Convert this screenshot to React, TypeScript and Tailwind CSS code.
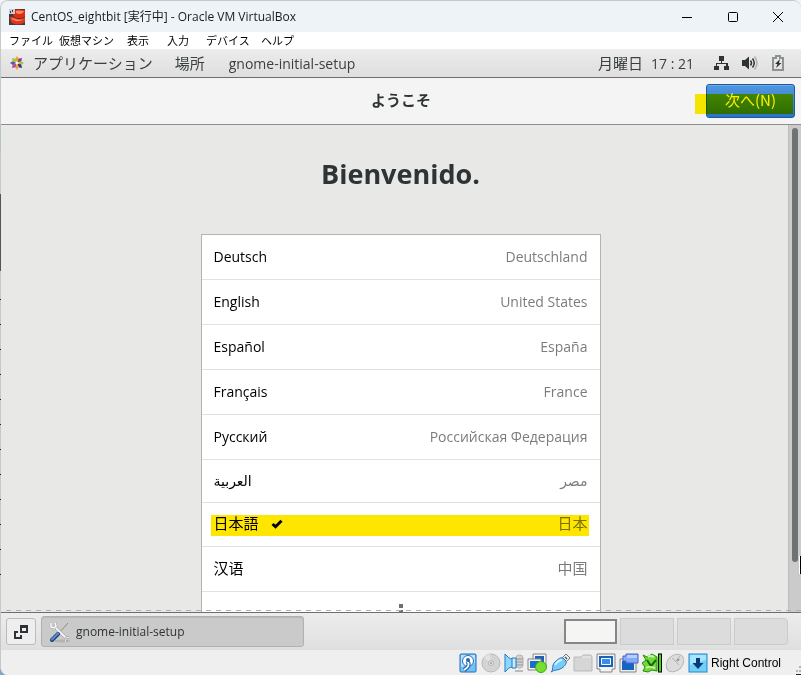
import React from "react";

type Language = { name: string; country: string; height: string; selected?: boolean; lang: string };

const languages: Language[] = [
  { name: "Deutsch", country: "Deutschland", height: "h-[45px]", lang: "de" },
  { name: "English", country: "United States", height: "h-[45px]", lang: "en" },
  { name: "Español", country: "España", height: "h-[45px]", lang: "es" },
  { name: "Français", country: "France", height: "h-[45px]", lang: "fr" },
  { name: "Русский", country: "Российская Федерация", height: "h-[45px]", lang: "ru" },
  { name: "العربية", country: "مصر", height: "h-[43px]", lang: "ar" },
  { name: "日本語", country: "日本", height: "h-[44px]", lang: "ja", selected: true },
  { name: "汉语", country: "中国", height: "h-[45px]", lang: "zh" },
];

const menus: [string, string][] = [
  ["ファイル", "w-[50px]"],
  ["仮想マシン", "w-[68px]"],
  ["表示", "w-[40px]"],
  ["入力", "w-[39px]"],
  ["デバイス", "w-[55px]"],
  ["ヘルプ", "w-[50px]"],
];

const cjk = "font-['Open_Sans','Noto_Sans_CJK_JP',sans-serif]";

function VirtualBoxIcon() {
  return (
    <svg width="16" height="16" viewBox="0 0 16 16" aria-hidden="true">
      <rect width="16" height="16" fill="#3a3d41" />
      <path d="M5 1c4-1 7 0 11 0v6c-1 2-4 2-7 2-3 0-5-2-5-4z" fill="#e02c14" />
      <path d="M7 2c3-1 5 0 8 0-1 3-5 4-8 2z" fill="#ff8a62" />
      <path d="M0 0h6v5H0z" fill="#c9cdd0" />
      <path d="M1 2h1v2H1zM3 1h1v2H3z" fill="#3a3d41" />
      <path d="M1 8c3-1 5 1 8 2 2 0 5 0 7-2v5c-3 3-10 3-13 1-1-1-2-4-2-6z" fill="#e4351b" />
      <path d="M2 9c3 0 6 3 12 1-2 3-9 3-12-1z" fill="#ff8a66" />
    </svg>
  );
}

function CentosIcon() {
  const petals: [string, number][] = [
    ["#f0a32a", 0], ["#8a3b8f", 45], ["#9ccb3a", 90], ["#33307f", 135],
    ["#f0a32a", 180], ["#b0479b", 225], ["#6b50a8", 270], ["#9ccb3a", 315],
  ];
  return (
    <svg width="16" height="16" viewBox="0 0 16 16" aria-hidden="true">
      {petals.map(([fill, angle]) => (
        <path key={angle} d="M8 7 6 4 8 1l2 3z" fill={fill} transform={`rotate(${angle} 8 8)`} />
      ))}
      <circle cx="8" cy="8" r="1" fill="#fff" />
    </svg>
  );
}

function NetworkIcon() {
  return (
    <svg width="16" height="16" viewBox="0 0 16 16" fill="#2e3436" aria-hidden="true">
      <path d="M5 1h5v5H8v2h6v3h1v4h-5v-4h2V9H3v2h2v4H0v-4h2V8h5V6H5z" />
    </svg>
  );
}

function VolumeIcon() {
  return (
    <svg width="16" height="16" viewBox="0 0 16 16" fill="none" aria-hidden="true">
      <path d="M0 5h3l4-3.500v13L3 11H0z" fill="#2e3436" />
      <path d="M8.500 5.500q2 2.500 0 5M10.500 3.500q3.500 4.500 0 9" stroke="#2e3436" strokeWidth="1.500" />
      <path d="M12.500 1.500q5 6.500 0 13" stroke="#b0b2b2" strokeWidth="1.500" />
    </svg>
  );
}

function BatteryIcon() {
  return (
    <svg width="12" height="16" viewBox="0 0 12 16" aria-hidden="true">
      <path d="M4 1h4v2h3v12H1V3h3z" fill="none" stroke="#8f9292" strokeWidth="2" />
      <path d="M8 4 3 9h2.500L4 13l5.500-5H7z" fill="#2e3436" />
    </svg>
  );
}

function CheckIcon() {
  return (
    <svg width="12" height="10" viewBox="0 0 12 10" aria-hidden="true">
      <path d="M1.500 5 4.500 7.700 10.500 1.800" fill="none" stroke="#000" strokeWidth="3" />
    </svg>
  );
}

function ToolsIcon() {
  return (
    <svg width="22" height="22" viewBox="0 0 22 22" fill="none" aria-hidden="true">
      <ellipse cx="13" cy="20" rx="8" ry="1.500" fill="#b2b2b2" />
      <path d="M19 2 10 12" stroke="#8a8a8a" />
      <path d="M5 5 18 18" stroke="#999" strokeWidth="3" />
      <path d="M5 5 18 18" stroke="#f5f5f5" strokeWidth="2" />
      <path d="M2 2v4l3 1 2-2-1-3" stroke="#a5a5a5" strokeWidth="2.500" />
      <path d="M2 2v4l3 1 2-2-1-3" stroke="#fff" strokeWidth="1.500" />
      <path d="M21 16l-4 1-1 4" stroke="#9a9a9a" strokeWidth="2" />
      <path d="M21 16l-4 1-1 4" stroke="#eee" />
      <path d="M9 13 3 19" stroke="#1e4377" strokeWidth="4" strokeLinecap="round" />
      <path d="M9 12.500 3 18.500" stroke="#5c8fce" strokeWidth="2" strokeLinecap="round" />
    </svg>
  );
}

const statusIcons: [string, React.ReactNode][] = [
  ["ハードディスク", <>
    <rect x="2" y="1" width="16" height="18" rx="1" fill="#6cc5f7" stroke="#2a6db5" />
    <path d="M3 2h14v8L3 14z" fill="#b4e4ff" />
    <circle cx="10" cy="8" r="5.500" fill="#fff" stroke="#2a6db5" />
    <path d="M9 8c3 3 2 6-3 9" fill="none" stroke="#1d5aa6" strokeWidth="4" />
    <path d="M9 8c3 3 2 6-3 9" fill="none" stroke="#fff" strokeWidth="2" />
    <circle cx="10" cy="7" r="2" fill="#2168ba" />
  </>],
  ["光学ドライブ", <>
    <circle cx="10" cy="10" r="9" fill="#d4d4d4" stroke="#b8b8b8" />
    <path d="M10 10 3 5a9 9 0 0 1 6-4z" fill="#e3e3e3" />
    <circle cx="10" cy="10" r="2.500" fill="#ececec" stroke="#b2b2b2" />
    <circle cx="10" cy="10" r="1" fill="#999" />
  </>],
  ["オーディオ", <>
    <rect x="12" y="2" width="7" height="13" rx="3" fill="#d2d2d2" stroke="#b5b5b5" />
    <path d="M12 6h7M12 9h7M12 12h7M11 18h8" stroke="#aaa" strokeWidth="1.500" />
    <path d="M1 1c3 3 4 5 8 5v8c-4 0-5 2-8 5z" fill="#8cd8fb" stroke="#2678c4" />
    <path d="M8 5h4v10H8z" fill="#c5edff" stroke="#2678c4" />
  </>],
  ["ネットワーク", <>
    <path d="M6 1h13v12H6z" fill="#f3f3f3" stroke="#858585" />
    <path d="M8 3h9v8H8z" fill="#1e60b5" />
    <path d="M1 6h13v11H1z" fill="#f3f3f3" stroke="#858585" />
    <path d="M3 8h9v7H3z" fill="#1c6cd0" />
    <circle cx="14" cy="14" r="5.500" fill="#73e02e" stroke="#46a31a" />
  </>],
  ["USB", <>
    <path d="m12 5 4-4 4 4-4 4z" fill="#eee" stroke="#777" />
    <path d="m15 4 2 2" stroke="#555" strokeWidth="1.500" />
    <path d="M1 19c3-2 0-6 4-10 3-3 6-5 8-4l3 3c1 2-1 5-4 7-4 3-7 1-11 4z" fill="#77ccf7" stroke="#2777bd" />
    <path d="M5 12c2-3 4-5 7-5" stroke="#d2f1ff" strokeWidth="2" fill="none" />
  </>],
  ["共有フォルダー", <>
    <path d="M1 4h8l1-2h8l1 2v14H1z" fill="#d6d6d6" stroke="#bababa" />
    <path d="M9 4h9" stroke="#eee" />
  </>],
  ["ディスプレイ", <>
    <path d="M1 1h18v15h-3v3H4v-3H1z" fill="#f3f3f3" stroke="#858585" />
    <path d="M3 3h14v11H3z" fill="#1763bd" />
    <path d="M5.500 5.500h9v6h-9z" fill="#3490ed" stroke="#fff" />
  </>],
  ["録画", <>
    <path d="M1 6h16v13H1z" fill="#eee" stroke="#858585" />
    <path d="M3 8h12v9H3z" fill="#1763c4" />
    <path d="M4 3h3V1h12v9H7V8H4z" fill="#83a9fa" stroke="#4b65c0" />
    <path d="M8 2h10v3H8z" fill="#b6ceff" />
  </>],
  ["プロセッサー", <>
    <path d="m1 2 4 2 5-3 5 3v14l-5-1-4 2-5-1 2-4-3-4 4-3z" fill="#6fd83a" stroke="#258f0c" />
    <path d="M5 7l4 6 5-6" fill="none" stroke="#156b06" strokeWidth="2" />
    <path d="M6 4c2-2 4-1 6 0M4 15c2-2 6-1 9 0" fill="none" stroke="#c6f7a0" strokeWidth="2" />
    <rect x="16.500" y="1" width="3" height="18" fill="#41d80d" stroke="#000" />
  </>],
  ["マウス統合", <>
    <ellipse cx="10" cy="10" rx="10" ry="7.500" transform="rotate(-45 10 10)" fill="#dcdcdc" stroke="#b8b8b8" />
    <path d="m7 5 7 7M11 8l4-5" stroke="#b2b2b2" fill="none" />
    <path d="m12 8 2-2" stroke="#999" strokeWidth="2" />
  </>],
  ["ホストキー", <>
    <rect x="1" y="1" width="18" height="18" fill="#6fd0fa" stroke="#2788c8" />
    <path d="M2 2h16v5L2 12z" fill="#a6e5ff" />
    <path d="M8 5h4v5h3.500L10 16l-5.500-6H8z" fill="#0a3a75" />
  </>],
];

function TitleBar() {
  return (
    <header className="flex h-[31px] shrink-0 items-center bg-[#eef3f8] pl-2">
      <VirtualBoxIcon />
      <h1 className={`${cjk} ml-1.5 flex-1 whitespace-nowrap text-[12px] text-[#1a1a1a]`}>
        CentOS_eightbit [実行中] - Oracle VM VirtualBox
      </h1>
      <button aria-label="最小化" className="flex h-full w-[46px] items-center justify-center">
        <svg width="12" height="12" viewBox="0 0 12 12"><path d="M1 6.500h10" stroke="#000" /></svg>
      </button>
      <button aria-label="最大化" className="flex h-full w-[45px] items-center justify-center">
        <svg width="12" height="12" viewBox="0 0 12 12"><rect x="1.500" y="1.500" width="9" height="9" rx="1" fill="none" stroke="#000" /></svg>
      </button>
      <button aria-label="閉じる" className="flex h-full w-[46px] items-center justify-center">
        <svg width="12" height="12" viewBox="0 0 12 12"><path d="m1 1 10 10M11 1 1 11" stroke="#000" /></svg>
      </button>
    </header>
  );
}

function LanguageRow({ item }: { item: Language }) {
  return (
    <li className={`${item.height} relative border-b border-[#e2e2e2]`}>
      <button
        aria-pressed={!!item.selected}
        className="flex size-full items-center px-3 pb-0.5 text-[14px] font-['Open_Sans','DejaVu_Sans',sans-serif]"
      >
        <span
          lang={item.lang}
          className={
            item.lang === "ja"
              ? "text-[15px] font-['Noto_Sans_CJK_JP',sans-serif]"
              : item.lang === "zh"
                ? "text-[15px] font-['Noto_Sans_CJK_SC',sans-serif]"
                : ""
          }
        >
          {item.name}
        </span>
        {item.selected && <span className="ml-3"><CheckIcon /></span>}
        <span
          lang={item.lang}
          className={
            item.lang === "ja"
              ? "ml-auto text-[15px] text-[#7b7d7d] font-['Noto_Sans_CJK_JP',sans-serif]"
              : item.lang === "zh"
                ? "ml-auto text-[15px] text-[#7b7d7d] font-['Noto_Sans_CJK_SC',sans-serif]"
                : "ml-auto text-[#7b7d7d]"
          }
        >
          {item.country}
        </span>
      </button>
      {item.selected && (
        <span className="pointer-events-none absolute top-3 right-[11px] left-[9px] h-[21px] bg-[#ffe600] mix-blend-multiply" />
      )}
    </li>
  );
}

export default function App() {
  return (
    <div className="h-screen bg-[linear-gradient(#f4f4f4_50%,#7fa6cf_50%)]">
      <div className="relative flex h-full flex-col overflow-hidden rounded-t-lg rounded-bl-lg border-t border-l border-[#c6c8ca] bg-[#efefef]">
        <TitleBar />

        <nav className="flex h-[17px] shrink-0 items-center bg-white pl-2 text-[11px] leading-[17px] text-black font-['Noto_Sans_CJK_JP',sans-serif]">
          {menus.map(([label, width]) => (
            <button key={label} className={`${width} whitespace-nowrap text-left`}>{label}</button>
          ))}
        </nav>

        <div className={`${cjk} flex h-[29px] shrink-0 items-center border-b border-[#6d6d6d] bg-linear-to-b from-[#ececec] to-[#dedede] pr-[17px] pl-2 text-[15px] whitespace-nowrap text-[#3a3f41]`}>
          <CentosIcon />
          <button className="ml-2">アプリケーション</button>
          <button className="ml-[22px]">場所</button>
          <button className="ml-6 text-[14px]">gnome-initial-setup</button>
          <button className="ml-auto flex items-center gap-2">
            <span>月曜日</span>
            <span className="text-[14px]">17 : 21</span>
          </button>
          <button aria-label="システム" className="ml-5 flex items-center gap-3">
            <NetworkIcon />
            <VolumeIcon />
            <span className="ml-0.5"><BatteryIcon /></span>
          </button>
        </div>

        <div className="grid h-[47px] shrink-0 grid-cols-[1fr_auto_1fr] items-center border-b border-[#8e8e8a] bg-[#f4f4f4]">
          <h2 className="col-start-2 pb-0.5 text-[15px] font-bold text-[#2e3436] font-['Noto_Sans_CJK_JP',sans-serif]">ようこそ</h2>
          <div className="relative mr-1.5 justify-self-end">
            <button className="flex h-[34px] w-[89px] items-center justify-center rounded-[3px] border border-[#1c5a9f] bg-linear-to-b from-[#4f97e0] to-[#2a72c8] pb-0.5 text-[15px] text-white shadow-[inset_0_1px_#6caae8] font-['Noto_Sans_CJK_JP',sans-serif]">
              次へ(N)
            </button>
            <span className="pointer-events-none absolute top-2.5 right-0.5 -left-[11px] h-5 bg-[#fff000] mix-blend-multiply" />
          </div>
        </div>

        <main className="relative flex min-h-0 flex-1 overflow-hidden bg-[#e8e8e6]">
          <div className="flex min-w-0 flex-1 flex-col items-center pl-3">
            <h2 className="mt-8 text-[27px] leading-[34px] font-bold text-[#2e3436] font-['Open_Sans',sans-serif]">Bienvenido.</h2>
            <ul className="mt-[43px] w-[400px] max-w-full shrink-0 border border-[#b4b4b2] bg-white">
              {languages.map((item) => <LanguageRow key={item.name} item={item} />)}
              <li className="h-[45px]">
                <button aria-label="その他" className="flex size-full flex-col items-center gap-0.5 pt-3">
                  <span className="size-1 bg-[#6e7070]" />
                  <span className="size-1 bg-[#6e7070]" />
                  <span className="size-1 bg-[#6e7070]" />
                </button>
              </li>
            </ul>
          </div>
          <div className="w-[13px] shrink-0 border-l border-[#bcbcb8] bg-[#cacbca] pt-[3px] pl-[3px]">
            <div className="h-[434px] w-1.5 rounded-full bg-[#6f7374]" />
          </div>
          <span className="absolute right-0 bottom-[38px] h-[18px] w-[2px] border-l border-white bg-black" />
          <span className="absolute inset-x-0 bottom-[1px] ml-[5px] h-px bg-[repeating-linear-gradient(90deg,#b0b0b0_0_5px,transparent_5px_10px)]" />
        </main>

        <footer className={`${cjk} flex h-[38px] shrink-0 items-center border-t border-[#6d6d6d] bg-linear-to-b from-[#ededed] to-[#dfdfdf] pr-[13px] pl-[5px]`}>
          <button aria-label="デスクトップを表示" className="flex h-[27px] w-[30px] items-center justify-center rounded-[3px] border border-[#bcbcbc] bg-[#eeeeee]">
            <svg width="14" height="14" viewBox="0 0 14 14" fill="none" stroke="#2e3436" strokeWidth="2">
              <path d="M7 1h6v6H7z" /><path d="M6 1.500h8" strokeWidth="3" />
              <path d="M4 7H1v6h6v-3" />
            </svg>
          </button>
          <button className="ml-[5px] flex h-[31px] w-[263px] items-center rounded-[3px] border border-[#b1b1b1] bg-[#cacaca] pl-[7px] text-[12px] text-[#2e3436] shadow-[inset_0_1px_1px_#b8b8b8]">
            <ToolsIcon />
            <span className="ml-[5px]">gnome-initial-setup</span>
          </button>
          <div className="ml-auto flex items-center gap-[3px]">
            <button aria-label="ワークスペース 1" className="h-[25px] w-[53px] border-2 border-[#868686] bg-[#f5f5f3]" />
            <button aria-label="ワークスペース 2" className="h-[27px] w-[54px] border border-[#cbcbcb] bg-[#dcdcdc]" />
            <button aria-label="ワークスペース 3" className="h-[27px] w-[54px] border border-[#cbcbcb] bg-[#dcdcdc]" />
            <button aria-label="ワークスペース 4" className="h-[27px] w-[54px] rounded-r border border-[#cbcbcb] bg-[#dcdcdc]" />
          </div>
        </footer>

        <div className="flex h-[25px] shrink-0 items-center justify-end bg-[#efefef] pr-5">
          <div className="flex gap-[3px]">
            {statusIcons.map(([label, drawing]) => (
              <button key={label} aria-label={label}>
                <svg width="20" height="20" viewBox="0 0 20 20">{drawing}</svg>
              </button>
            ))}
          </div>
          <span className="ml-[3px] text-[12px] text-black font-['Liberation_Sans',sans-serif]">Right Control</span>
        </div>

        <svg className="absolute right-0 bottom-0" width="5" height="9" viewBox="0 0 5 9" fill="#b5b5b5" aria-hidden="true">
          <path d="M3 0h2v2H3zM0 4h2v2H0zM3 4h2v2H3z" /><path d="M0 8h5v1H0z" fill="#222" />
        </svg>
      </div>

      <svg className="absolute top-0 left-0" width="1" height="580" viewBox="0 0 1 580" aria-hidden="true">
        <path d="M0 125h1v28H0z" fill="#b8c6c0" />
        <path d="M0 194h1v77H0z" fill="#555" />
        {Array.from({ length: 12 }, (_, i) => (
          <rect key={i} x="0" y={299 + i * 25} width="1" height="1" fill="#222" />
        ))}
      </svg>
    </div>
  );
}
